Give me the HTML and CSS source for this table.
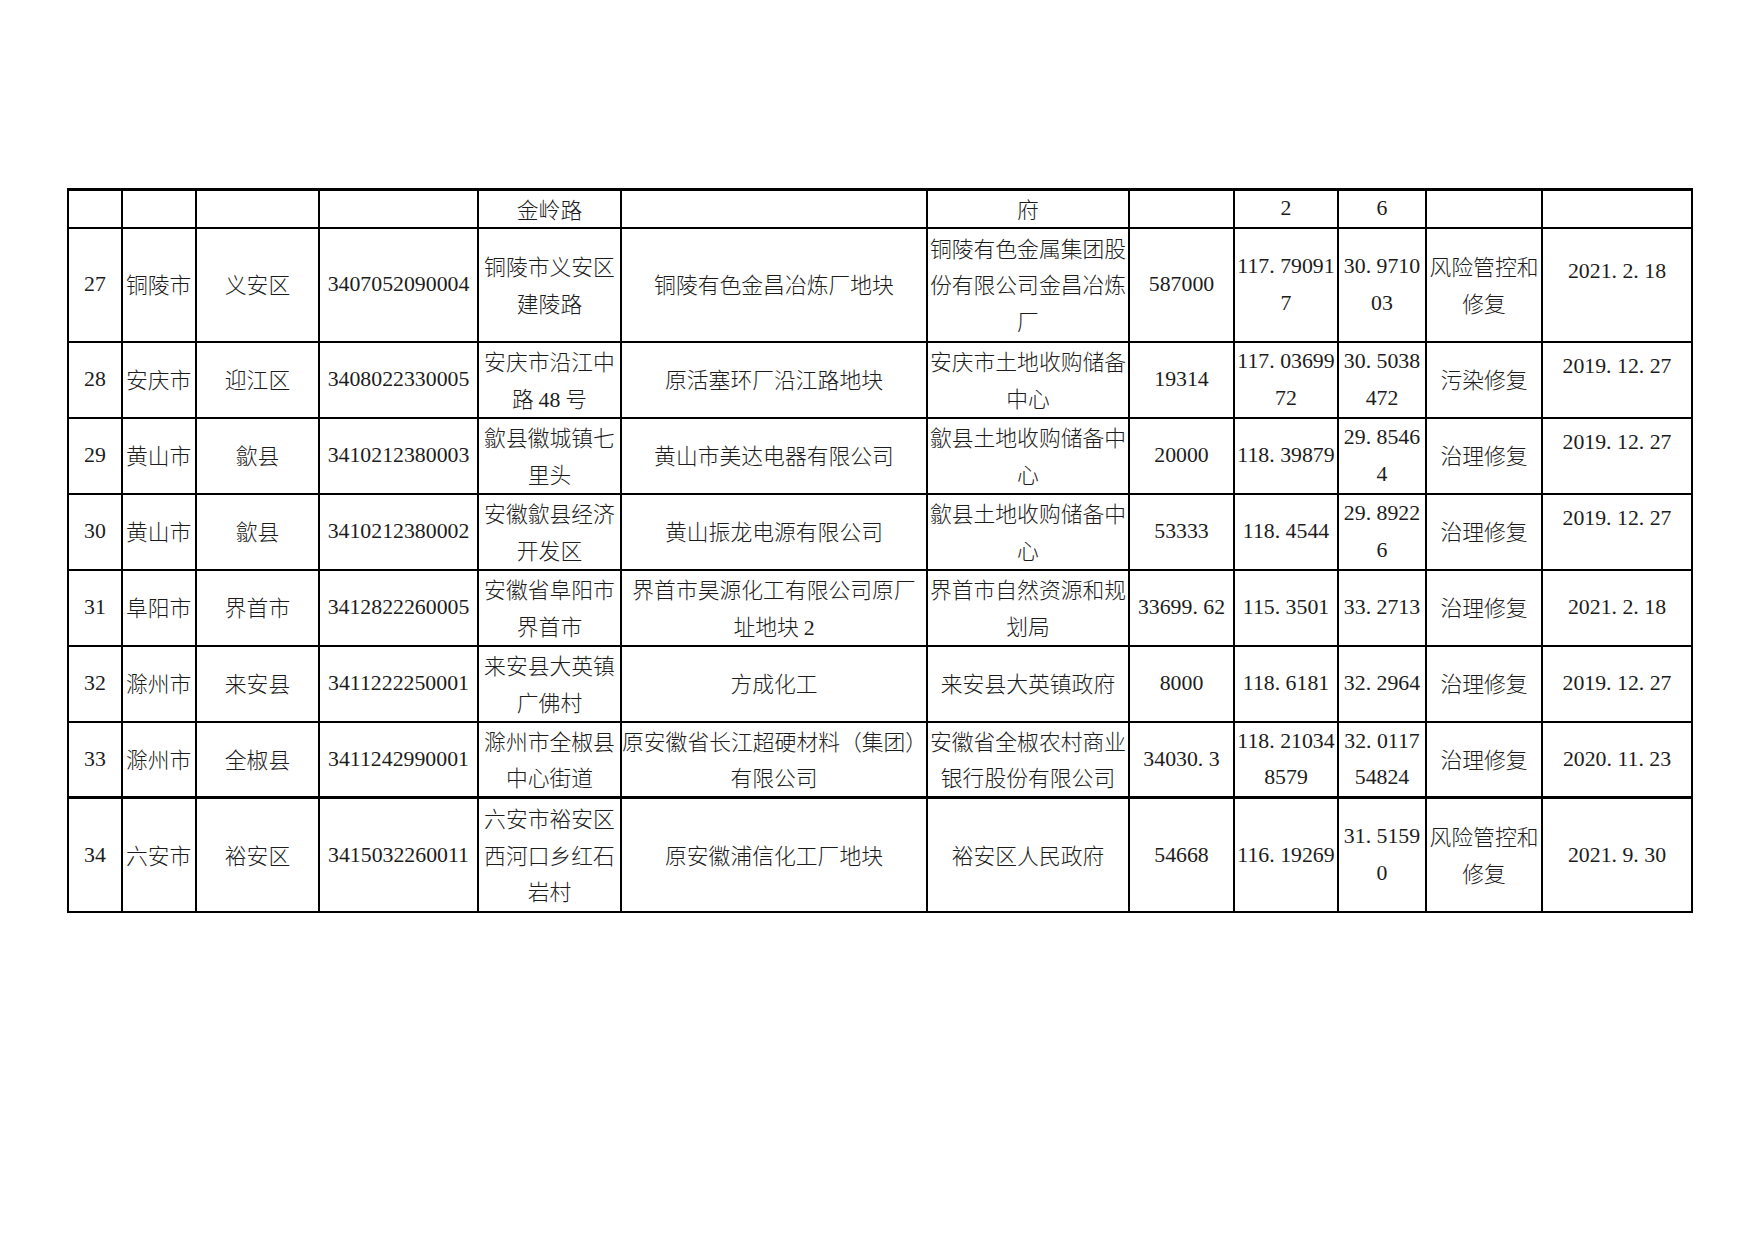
FILE: index.html
```html
<!DOCTYPE html>
<html lang="zh-CN">
<head>
<meta charset="utf-8">
<title>地块名录</title>
<link rel="stylesheet" href="styles.css">
</head>
<body>
<div class="page">
<table class="grid">
<colgroup>
<col class="c1"><col class="c2"><col class="c3"><col class="c4"><col class="c5"><col class="c6"><col class="c7"><col class="c8"><col class="c9"><col class="c10"><col class="c11"><col class="c12">
</colgroup>
<tbody>
<tr class="r1">
<td></td><td></td><td></td><td></td><td>金岭路</td><td></td><td>府</td><td></td><td class="n">2</td><td class="n">6</td><td></td><td></td>
</tr>
<tr class="r3">
<td class="n">27</td><td class="city">铜陵市</td><td>义安区</td><td class="n">3407052090004</td><td>铜陵市义安区<br>建陵路</td><td>铜陵有色金昌冶炼厂地块</td><td>铜陵有色金属集团股<br>份有限公司金昌冶炼<br>厂</td><td class="n">587000</td><td class="n">117<span class="p">.</span>79091<br>7</td><td class="n">30<span class="p">.</span>9710<br>03</td><td>风险管控和<br>修复</td><td class="n up">2021<span class="p">.</span>2<span class="p">.</span>18</td>
</tr>
<tr class="r2">
<td class="n">28</td><td class="city">安庆市</td><td>迎江区</td><td class="n">3408022330005</td><td>安庆市沿江中<br>路 <span class="ni">48</span> 号</td><td>原活塞环厂沿江路地块</td><td>安庆市土地收购储备<br>中心</td><td class="n">19314</td><td class="n">117<span class="p">.</span>03699<br>72</td><td class="n">30<span class="p">.</span>5038<br>472</td><td>污染修复</td><td class="n up">2019<span class="p">.</span>12<span class="p">.</span>27</td>
</tr>
<tr class="r2">
<td class="n">29</td><td class="city">黄山市</td><td>歙县</td><td class="n">3410212380003</td><td>歙县徽城镇七<br>里头</td><td>黄山市美达电器有限公司</td><td>歙县土地收购储备中<br>心</td><td class="n">20000</td><td class="n">118<span class="p">.</span>39879</td><td class="n">29<span class="p">.</span>8546<br>4</td><td>治理修复</td><td class="n up">2019<span class="p">.</span>12<span class="p">.</span>27</td>
</tr>
<tr class="r2">
<td class="n">30</td><td class="city">黄山市</td><td>歙县</td><td class="n">3410212380002</td><td>安徽歙县经济<br>开发区</td><td>黄山振龙电源有限公司</td><td>歙县土地收购储备中<br>心</td><td class="n">53333</td><td class="n">118<span class="p">.</span>4544</td><td class="n">29<span class="p">.</span>8922<br>6</td><td>治理修复</td><td class="n up">2019<span class="p">.</span>12<span class="p">.</span>27</td>
</tr>
<tr class="r2">
<td class="n">31</td><td class="city">阜阳市</td><td>界首市</td><td class="n">3412822260005</td><td>安徽省阜阳市<br>界首市</td><td>界首市昊源化工有限公司原厂<br>址地块 <span class="ni">2</span></td><td>界首市自然资源和规<br>划局</td><td class="n">33699<span class="p">.</span>62</td><td class="n">115<span class="p">.</span>3501</td><td class="n">33<span class="p">.</span>2713</td><td>治理修复</td><td class="n">2021<span class="p">.</span>2<span class="p">.</span>18</td>
</tr>
<tr class="r2">
<td class="n">32</td><td class="city">滁州市</td><td>来安县</td><td class="n">3411222250001</td><td>来安县大英镇<br>广佛村</td><td>方成化工</td><td>来安县大英镇政府</td><td class="n">8000</td><td class="n">118<span class="p">.</span>6181</td><td class="n">32<span class="p">.</span>2964</td><td>治理修复</td><td class="n">2019<span class="p">.</span>12<span class="p">.</span>27</td>
</tr>
<tr class="r2">
<td class="n">33</td><td class="city">滁州市</td><td>全椒县</td><td class="n">3411242990001</td><td>滁州市全椒县<br>中心街道</td><td>原安徽省长江超硬材料（集团）<br>有限公司</td><td>安徽省全椒农村商业<br>银行股份有限公司</td><td class="n">34030<span class="p">.</span>3</td><td class="n">118<span class="p">.</span>21034<br>8579</td><td class="n">32<span class="p">.</span>0117<br>54824</td><td>治理修复</td><td class="n">2020<span class="p">.</span>11<span class="p">.</span>23</td>
</tr>
<tr class="r3 thick">
<td class="n">34</td><td class="city">六安市</td><td>裕安区</td><td class="n">3415032260011</td><td>六安市裕安区<br>西河口乡红石<br>岩村</td><td>原安徽浦信化工厂地块</td><td>裕安区人民政府</td><td class="n">54668</td><td class="n">116<span class="p">.</span>19269</td><td class="n">31<span class="p">.</span>5159<br>0</td><td>风险管控和<br>修复</td><td class="n">2021<span class="p">.</span>9<span class="p">.</span>30</td>
</tr>
</tbody>
</table>
</div>
</body>
</html>
```

FILE: styles.css
```css
html, body {
  margin: 0;
  padding: 0;
  background: #ffffff;
}

.page {
  padding: 188px 0 0 67px;
}

.grid {
  border-collapse: collapse;
  table-layout: fixed;
  width: 1624px;
  font-family: "Noto Sans CJK SC", "Liberation Serif", serif;
  font-weight: 300;
  font-size: 21.8px;
  line-height: 36.5px;
  color: #1c1c1c;
}

.c1 { width: 54px; }
.c2 { width: 74px; }
.c3 { width: 123px; }
.c4 { width: 159px; }
.c5 { width: 143px; }
.c6 { width: 306px; }
.c7 { width: 202px; }
.c8 { width: 105px; }
.c9 { width: 104px; }
.c10 { width: 88px; }
.c11 { width: 116px; }
.c12 { width: 150px; }

.grid td {
  border: 2px solid #000;
  padding: 0;
  text-align: center;
  vertical-align: middle;
  white-space: nowrap;
}

.grid tr:first-child td {
  border-top-width: 3px;
}

.r1 { height: 38px; line-height: 33px; }
.r2 { height: 76px; }
.r3 { height: 114px; }

.grid .thick td {
  border-top-width: 3px;
}

.grid .city {
  text-align: left;
  padding-left: 3px;
}

.n {
  font-family: "Liberation Serif", serif;
  font-weight: 400;
}

.ni {
  font-family: "Liberation Serif", serif;
  font-weight: 400;
  line-height: 1;
}

.p {
  padding-right: 0.25em;
}

.grid .up {
  padding-bottom: 26px;
}
```
